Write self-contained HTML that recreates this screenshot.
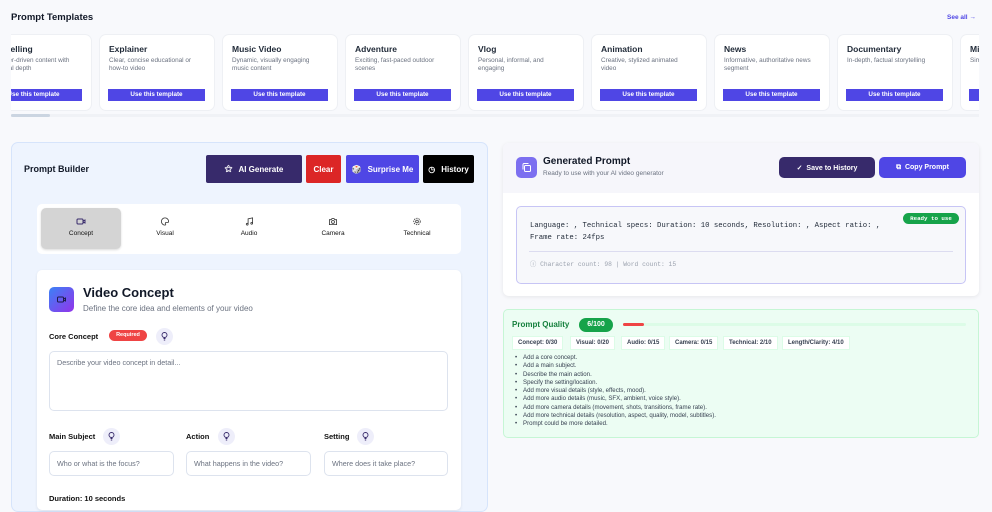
<!DOCTYPE html>
<html><head><meta charset="utf-8"><style>
*{box-sizing:border-box;margin:0;padding:0}
body{width:992px;height:500px;overflow:hidden;background:#f8f9fc;font-family:"Liberation Sans",sans-serif;color:#111827;position:relative}
.a{position:absolute}
.card{position:absolute;top:35px;width:114px;height:75px;background:#fff;border-radius:6px;box-shadow:0 0 0 1px #eef0f4}
.card h4{position:absolute;left:9px;top:9px;font-size:8.5px;font-weight:bold;color:#1f2937}
.card p{position:absolute;left:9px;top:22px;width:90px;font-size:6.4px;line-height:8.3px;color:#6b7280}
.card b{position:absolute;left:8px;top:54px;width:97px;height:12px;background:#4f46e5;color:#fff;font-size:6.3px;text-align:center;line-height:12px}
.btn{position:absolute;color:#fff;font-weight:bold;font-size:8px;border-radius:2px;display:flex;align-items:center;justify-content:center;gap:6px}
.tab{position:absolute;top:208px;width:80px;height:41px;font-size:6.5px;text-align:center;color:#111}
.tab svg{display:block;margin:9px auto 4px}
.lbl{position:absolute;font-size:7.5px;font-weight:bold;color:#111}
.bulb{position:absolute;width:17px;height:17px;border-radius:50%;background:#eeeefa}
.bulb svg{position:absolute;left:4px;top:3px}
.inp{position:absolute;border:1px solid #dde3ee;border-radius:5px;background:#fff;font-size:7.2px;color:#6b7280;padding-left:7px}
.chip{position:absolute;top:336px;height:14px;background:#fff;border:1px solid #dcfce7;font-size:6px;font-weight:bold;color:#374151;line-height:12px;padding:0 5px}
ul{position:absolute;left:523px;top:354px;font-size:6.1px;line-height:8.3px;color:#374151;list-style:none}
ul li:before{content:"•";position:absolute;left:-8px}
</style></head><body>
<div class="a" style="left:11px;top:12px;font-size:9.5px;font-weight:bold">Prompt Templates</div>
<div class="a" style="left:947px;top:14px;font-size:6.5px;font-weight:bold;color:#4f46e5">See all →</div>
<div class="a" style="left:11px;top:30px;width:968px;height:84px;overflow:hidden">
<div class="card" style="left:-34px;top:5px"><h4>Storytelling</h4><p>Character-driven content with emotional depth</p><b>Use this template</b></div>
<div class="card" style="left:89px;top:5px"><h4>Explainer</h4><p>Clear, concise educational or how-to video</p><b>Use this template</b></div>
<div class="card" style="left:212px;top:5px"><h4>Music Video</h4><p>Dynamic, visually engaging music content</p><b>Use this template</b></div>
<div class="card" style="left:335px;top:5px"><h4>Adventure</h4><p>Exciting, fast-paced outdoor scenes</p><b>Use this template</b></div>
<div class="card" style="left:458px;top:5px"><h4>Vlog</h4><p>Personal, informal, and engaging</p><b>Use this template</b></div>
<div class="card" style="left:581px;top:5px"><h4>Animation</h4><p>Creative, stylized animated video</p><b>Use this template</b></div>
<div class="card" style="left:704px;top:5px"><h4>News</h4><p>Informative, authoritative news segment</p><b>Use this template</b></div>
<div class="card" style="left:827px;top:5px"><h4>Documentary</h4><p>In-depth, factual storytelling</p><b>Use this template</b></div>
<div class="card" style="left:950px;top:5px"><h4>Minimal</h4><p>Simple, clean visuals</p><b>Use this template</b></div>
</div>
<div class="a" style="left:11px;top:114px;width:968px;height:3px;background:#f0f2f6"></div>
<div class="a" style="left:11px;top:114px;width:39px;height:3px;border-radius:2px;background:#cbd5e1"></div>

<div class="a" style="left:11px;top:142px;width:477px;height:370px;background:#eef4fe;border:1px solid #d6e4fb;border-radius:7px"></div>
<div class="a" style="left:24px;top:164px;font-size:9px;font-weight:bold">Prompt Builder</div>
<div class="btn" style="left:206px;top:155px;width:96px;height:28px;background:#372a6b"><span>⚝</span>AI Generate</div>
<div class="btn" style="left:306px;top:155px;width:35px;height:28px;background:#dc2626">Clear</div>
<div class="btn" style="left:346px;top:155px;width:73px;height:28px;background:#4f46e5"><span style="font-size:8px">🎲</span>Surprise Me</div>
<div class="btn" style="left:423px;top:155px;width:51px;height:28px;background:#000"><span>◷</span>History</div>

<div class="a" style="left:37px;top:204px;width:424px;height:50px;background:#fff;border-radius:5px"></div>
<div class="a" style="left:41px;top:208px;width:80px;height:41px;background:#d4d4d4;border-radius:5px;box-shadow:0 1px 2px rgba(0,0,0,.15)"></div>
<div class="tab" style="left:41px"><svg width="10" height="9" viewBox="0 0 10 9" fill="none" stroke="#372a6b" stroke-width="1"><rect x="1" y="2" width="6" height="5" rx="1"/><path d="M7 4l2-1v3l-2-1"/></svg>Concept</div>
<div class="tab" style="left:125px"><svg width="10" height="9" viewBox="0 0 10 10" fill="none" stroke="#333" stroke-width=".9"><path d="M5 1a4 4 0 1 0 0 8c1 0 1-1 .5-1.5S5.5 6 6.5 6H8a1 1 0 0 0 1-1 4 4 0 0 0-4-4z"/></svg>Visual</div>
<div class="tab" style="left:209px"><svg width="10" height="9" viewBox="0 0 10 10" fill="none" stroke="#333" stroke-width=".9"><path d="M4 8V2l5-1v6"/><circle cx="3" cy="8" r="1"/><circle cx="8" cy="7" r="1"/></svg>Audio</div>
<div class="tab" style="left:293px"><svg width="10" height="9" viewBox="0 0 10 10" fill="none" stroke="#333" stroke-width=".9"><path d="M1 3h2l1-1.5h2L7 3h2v5.5H1z"/><circle cx="5" cy="5.5" r="1.6"/></svg>Camera</div>
<div class="tab" style="left:377px"><svg width="10" height="9" viewBox="0 0 10 10" fill="none" stroke="#333" stroke-width=".9"><circle cx="5" cy="5" r="1.5"/><circle cx="5" cy="5" r="3.6" stroke-dasharray="1.6 1"/></svg>Technical</div>

<div class="a" style="left:37px;top:270px;width:424px;height:240px;background:#fff;border-radius:5px;box-shadow:0 1px 3px rgba(0,0,0,.08)"></div>
<div class="a" style="left:49px;top:287px;width:25px;height:25px;border-radius:5px;background:linear-gradient(135deg,#3b82f6,#9333ea)"><svg style="position:absolute;left:7px;top:8px" width="11" height="9" viewBox="0 0 10 9" fill="none" stroke="#1e1b4b" stroke-width="1"><rect x="1" y="2" width="6" height="5" rx="1"/><path d="M7 4l2-1v3l-2-1"/></svg></div>
<div class="a" style="left:83px;top:285px;font-size:13px;font-weight:bold">Video Concept</div>
<div class="a" style="left:83px;top:304px;font-size:8px;color:#6b7280">Define the core idea and elements of your video</div>
<div class="lbl" style="left:49px;top:332px">Core Concept</div>
<div class="a" style="left:109px;top:330px;width:38px;height:11px;border-radius:6px;background:#ef4444;color:#fff;font-size:5.5px;font-weight:bold;text-align:center;line-height:11px">Required</div>
<div class="bulb" style="left:156px;top:328px"><svg width="9" height="11" viewBox="0 0 9 11" fill="none" stroke="#372a6b" stroke-width=".9"><circle cx="4.5" cy="4" r="2.5"/><path d="M3.5 7.5h2M3.8 9h1.4"/></svg></div>
<div class="inp" style="left:49px;top:351px;width:399px;height:60px;padding-top:6px">Describe your video concept in detail...</div>
<div class="lbl" style="left:49px;top:432px">Main Subject</div>
<div class="bulb" style="left:103px;top:428px"><svg width="9" height="11" viewBox="0 0 9 11" fill="none" stroke="#372a6b" stroke-width=".9"><circle cx="4.5" cy="4" r="2.5"/><path d="M3.5 7.5h2M3.8 9h1.4"/></svg></div>
<div class="lbl" style="left:186px;top:432px">Action</div>
<div class="bulb" style="left:218px;top:428px"><svg width="9" height="11" viewBox="0 0 9 11" fill="none" stroke="#372a6b" stroke-width=".9"><circle cx="4.5" cy="4" r="2.5"/><path d="M3.5 7.5h2M3.8 9h1.4"/></svg></div>
<div class="lbl" style="left:324px;top:432px">Setting</div>
<div class="bulb" style="left:357px;top:428px"><svg width="9" height="11" viewBox="0 0 9 11" fill="none" stroke="#372a6b" stroke-width=".9"><circle cx="4.5" cy="4" r="2.5"/><path d="M3.5 7.5h2M3.8 9h1.4"/></svg></div>
<div class="inp" style="left:49px;top:451px;width:125px;height:25px;line-height:23px">Who or what is the focus?</div>
<div class="inp" style="left:186px;top:451px;width:125px;height:25px;line-height:23px">What happens in the video?</div>
<div class="inp" style="left:324px;top:451px;width:124px;height:25px;line-height:23px">Where does it take place?</div>
<div class="lbl" style="left:49px;top:494px">Duration: 10 seconds</div>

<div class="a" style="left:503px;top:143px;width:476px;height:153px;background:#fff;border-radius:6px;box-shadow:0 1px 4px rgba(0,0,0,.08);overflow:hidden"><div style="height:50px;background:#f6f6fb"></div></div>
<div class="a" style="left:516px;top:157px;width:21px;height:21px;border-radius:5px;background:#7c6ff0"><svg style="position:absolute;left:5px;top:5px" width="11" height="11" viewBox="0 0 11 11" fill="none" stroke="#fff" stroke-width="1"><rect x="3.5" y="3.5" width="6" height="6" rx="1"/><path d="M2 7.5V2.5a1 1 0 0 1 1-1h4.5"/></svg></div>
<div class="a" style="left:543px;top:156px;font-size:10px;font-weight:bold">Generated Prompt</div>
<div class="a" style="left:543px;top:170px;font-size:6.5px;color:#6b7280">Ready to use with your AI video generator</div>
<div class="btn" style="left:779px;top:157px;width:96px;height:21px;background:#372a6b;border-radius:5px;font-size:7px">✓&nbsp;&nbsp;Save to History</div>
<div class="btn" style="left:879px;top:157px;width:87px;height:21px;background:#4f46e5;border-radius:5px;font-size:7px">⧉&nbsp;&nbsp;Copy Prompt</div>
<div class="a" style="left:516px;top:206px;width:450px;height:78px;border:1px solid #c7c5f5;border-radius:5px;background:#f7f8fb"></div>
<div class="a" style="left:903px;top:213px;width:56px;height:11px;border-radius:6px;background:#16a34a;color:#fff;font-family:'Liberation Mono',monospace;font-size:5.8px;font-weight:bold;text-align:center;line-height:11px">Ready to use</div>
<div class="a" style="left:530px;top:220px;font-family:'Liberation Mono',monospace;font-size:7.3px;line-height:12px;color:#1f2937">Language: , Technical specs: Duration: 10 seconds, Resolution: , Aspect ratio: ,<br>Frame rate: 24fps</div>
<div class="a" style="left:529px;top:251px;width:424px;height:1px;background:#dcdcf0"></div>
<div class="a" style="left:530px;top:259px;font-family:'Liberation Mono',monospace;font-size:6.3px;color:#9ca3af">ⓘ Character count: 98 | Word count: 15</div>

<div class="a" style="left:503px;top:309px;width:476px;height:129px;background:#ecfdf3;border:1px solid #c6f6d5;border-radius:5px"></div>
<div class="a" style="left:512px;top:320px;font-size:8px;font-weight:bold;color:#15803d">Prompt Quality</div>
<div class="a" style="left:579px;top:318px;width:34px;height:14px;border-radius:7px;background:#16a34a;color:#fff;font-size:7px;font-weight:bold;text-align:center;line-height:14px">6/100</div>
<div class="a" style="left:623px;top:323px;width:343px;height:3px;border-radius:2px;background:#dcfce7"></div>
<div class="a" style="left:623px;top:323px;width:21px;height:3px;border-radius:2px;background:#ef4444"></div>
<div class="chip" style="left:512px">Concept: 0/30</div>
<div class="chip" style="left:570px">Visual: 0/20</div>
<div class="chip" style="left:621px">Audio: 0/15</div>
<div class="chip" style="left:669px">Camera: 0/15</div>
<div class="chip" style="left:723px">Technical: 2/10</div>
<div class="chip" style="left:782px">Length/Clarity: 4/10</div>
<ul>
<li>Add a core concept.</li>
<li>Add a main subject.</li>
<li>Describe the main action.</li>
<li>Specify the setting/location.</li>
<li>Add more visual details (style, effects, mood).</li>
<li>Add more audio details (music, SFX, ambient, voice style).</li>
<li>Add more camera details (movement, shots, transitions, frame rate).</li>
<li>Add more technical details (resolution, aspect, quality, model, subtitles).</li>
<li>Prompt could be more detailed.</li>
</ul>
</body></html>
